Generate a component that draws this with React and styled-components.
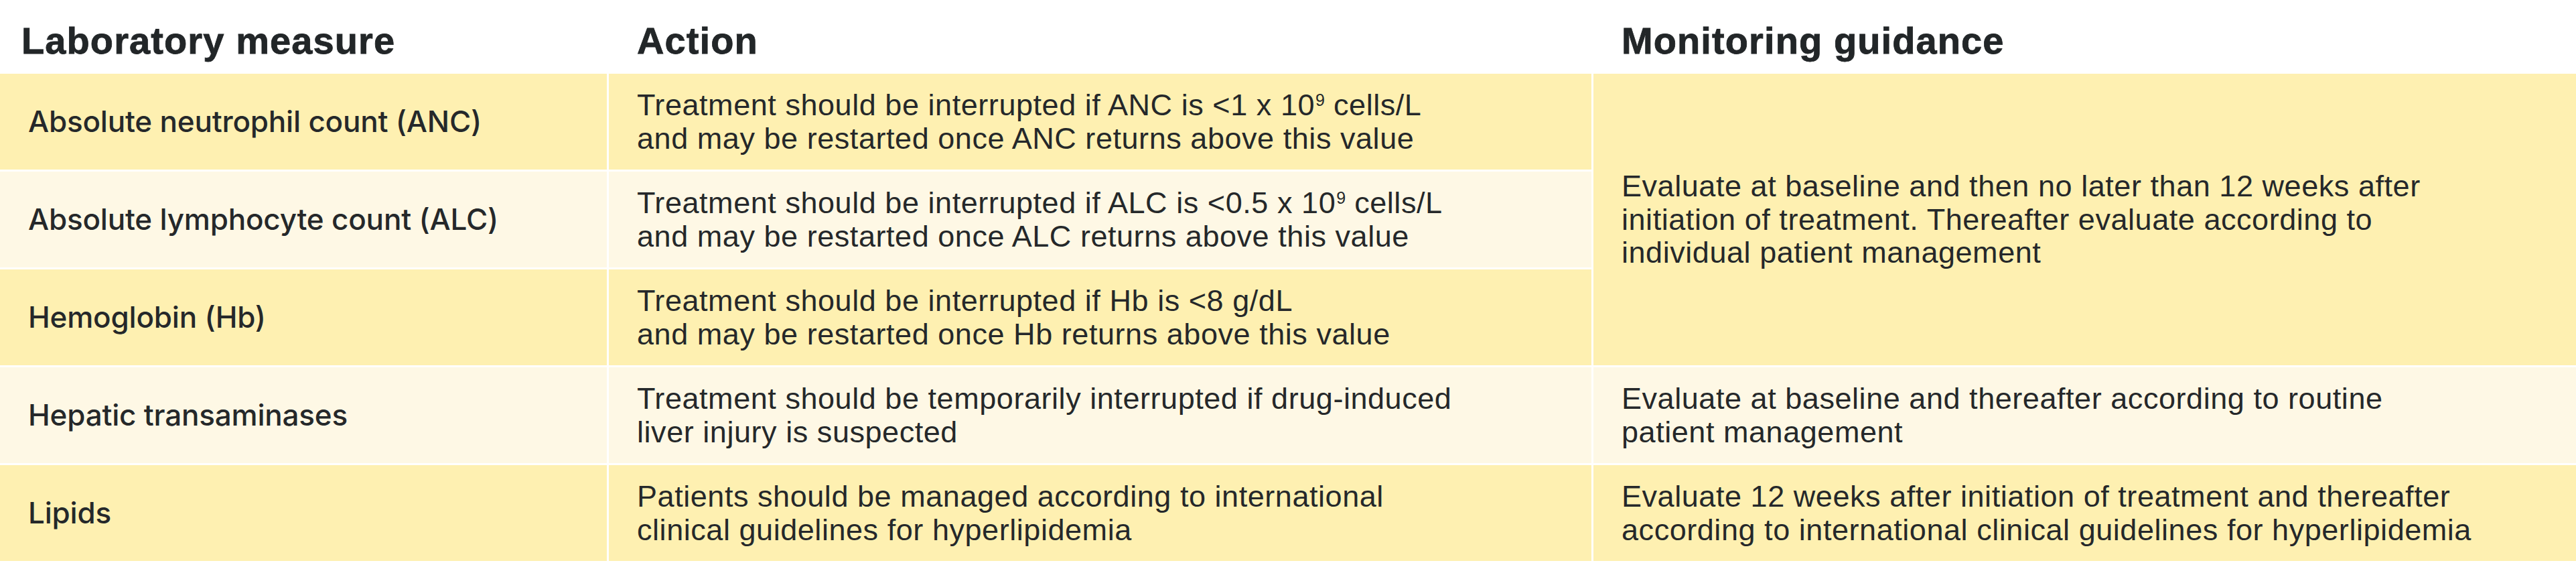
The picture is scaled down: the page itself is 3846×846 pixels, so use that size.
import React from "react";
import styled, { createGlobalStyle } from "styled-components";

const GlobalStyle = createGlobalStyle`
  html, body {
    margin: 0;
    padding: 0;
    background: #ffffff;
  }
  body {
    font-family: "Liberation Sans", Arial, sans-serif;
    color: #25282a;
  }
`;

const YELLOW = "#fef0b1";
const CREAM = "#fef8e5";

const Table = styled.div`
  width: 3846px;
  display: flex;
  flex-direction: column;
  background: #ffffff;
`;

const HeaderRow = styled.div`
  display: grid;
  grid-template-columns: 906px 1467px 1467px;
  column-gap: 3px;
  height: 110px;
`;

const HeaderCell = styled.div`
  display: flex;
  align-items: center;
  padding: 10px 0 0 ${(p) => (p.$first ? "32px" : "42px")};
  font-family: "Liberation Sans", Arial, sans-serif;
  font-weight: 700;
  font-size: 56px;
  letter-spacing: 1.1px;
  color: #222628;
  -webkit-text-stroke: 0.8px #222628;
`;

const Body = styled.div`
  display: grid;
  grid-template-columns: 906px 1467px 1467px;
  grid-auto-rows: 143px;
  gap: 3px;
  background: #ffffff;
`;

const Cell = styled.div`
  display: flex;
  align-items: center;
  padding: 0 20px 0 42px;
  background: ${(p) => (p.$tone === "light" ? CREAM : YELLOW)};
  grid-row: ${(p) => (p.$rows ? `span ${p.$rows}` : "auto")};
`;

const Label = styled.span`
  font-family: Inter, "Noto Sans", sans-serif;
  font-weight: 500;
  font-size: 44px;
  letter-spacing: -0.2px;
  line-height: 1.1;
  color: #25282a;
`;

const Text = styled.p`
  margin: 0;
  font-family: "Liberation Sans", Arial, sans-serif;
  font-weight: 400;
  font-size: 45px;
  letter-spacing: 0.55px;
  line-height: 49.5px;
  color: #25282a;
`;

const Sup = styled.sup`
  font-size: 25px;
  line-height: 0;
  letter-spacing: 0;
  vertical-align: 14px;
  margin-left: 1px;
`;

const rows = [
  {
    label: "Absolute neutrophil count (ANC)",
    tone: "dark",
    action: (
      <>
        Treatment should be interrupted if ANC is &lt;1 x 10<Sup>9</Sup> cells/L
        <br />
        and may be restarted once ANC returns above this value
      </>
    ),
  },
  {
    label: "Absolute lymphocyte count (ALC)",
    tone: "light",
    action: (
      <>
        Treatment should be interrupted if ALC is &lt;0.5 x 10<Sup>9</Sup> cells/L
        <br />
        and may be restarted once ALC returns above this value
      </>
    ),
  },
  {
    label: "Hemoglobin (Hb)",
    tone: "dark",
    action: (
      <>
        Treatment should be interrupted if Hb is &lt;8 g/dL
        <br />
        and may be restarted once Hb returns above this value
      </>
    ),
  },
  {
    label: "Hepatic transaminases",
    tone: "light",
    action: (
      <>
        Treatment should be temporarily interrupted if drug-induced
        <br />
        liver injury is suspected
      </>
    ),
    monitoring: (
      <>
        Evaluate at baseline and thereafter according to routine
        <br />
        patient management
      </>
    ),
  },
  {
    label: "Lipids",
    tone: "dark",
    action: (
      <>
        Patients should be managed according to international
        <br />
        clinical guidelines for hyperlipidemia
      </>
    ),
    monitoring: (
      <>
        Evaluate 12 weeks after initiation of treatment and thereafter
        <br />
        according to international clinical guidelines for hyperlipidemia
      </>
    ),
  },
];

export default function App() {
  return (
    <>
      <GlobalStyle />
      <Table>
        <HeaderRow>
          <HeaderCell $first>Laboratory measure</HeaderCell>
          <HeaderCell>Action</HeaderCell>
          <HeaderCell>Monitoring guidance</HeaderCell>
        </HeaderRow>
        <Body>
          {rows.map((r, i) => (
            <React.Fragment key={r.label}>
              <Cell $tone={r.tone}>
                <Label>{r.label}</Label>
              </Cell>
              <Cell $tone={r.tone}>
                <Text>{r.action}</Text>
              </Cell>
              {i === 0 && (
                <Cell $tone="dark" $rows={3}>
                  <Text>
                    Evaluate at baseline and then no later than 12 weeks after
                    <br />
                    initiation of treatment. Thereafter evaluate according to
                    <br />
                    individual patient management
                  </Text>
                </Cell>
              )}
              {r.monitoring && (
                <Cell $tone={r.tone}>
                  <Text>{r.monitoring}</Text>
                </Cell>
              )}
            </React.Fragment>
          ))}
        </Body>
      </Table>
    </>
  );
}
